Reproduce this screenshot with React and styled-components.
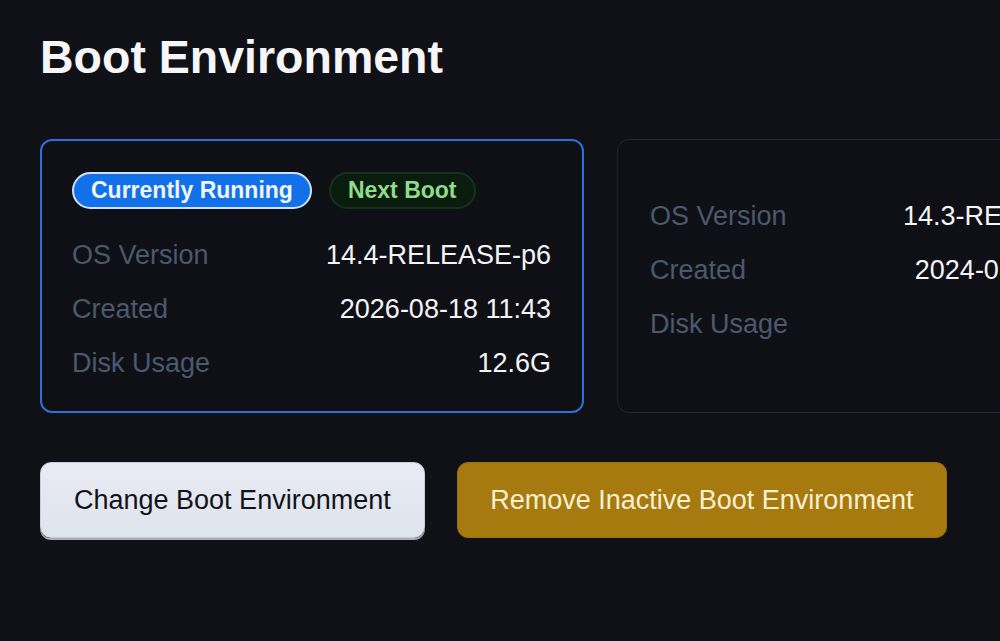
import React from "react";
import styled, { createGlobalStyle } from "styled-components";

const Global = createGlobalStyle`
  html, body { margin: 0; padding: 0; background: #101116; overflow: hidden; }
  body { font-family: "Liberation Sans", Arial, Helvetica, sans-serif; }
  * { box-sizing: border-box; }
`;

const Page = styled.div`
  width: 1000px;
  height: 641px;
  padding: 30px 0 0 40px;
  background: #101116;
  overflow: hidden;
  display: flex;
  flex-direction: column;
`;

const Title = styled.h1`
  margin: 0;
  font-size: 46.5px;
  line-height: 55px;
  font-weight: 700;
  color: #f6f6f8;
  letter-spacing: 0;
`;

const CardRow = styled.div`
  display: flex;
  gap: 33px;
  margin-top: 54px;
  align-items: stretch;
`;

const Card = styled.div`
  flex: 0 0 544px;
  width: 544px;
  height: 274px;
  border-radius: 12px;
  border: ${(p) => (p.$active ? "2px solid #2f70d8" : "1.5px solid #24262d")};
  background: #0f1015;
  padding: ${(p) => (p.$active ? "31px 31px 0 30px" : "49px 32px 0 32px")};
  display: flex;
  flex-direction: column;
`;

const Badges = styled.div`
  display: flex;
  flex-shrink: 0;
  gap: 17px;
  margin-bottom: 19px;
`;

const Badge = styled.span`
  display: inline-flex;
  align-items: center;
  height: 37px;
  padding: 0 17px;
  border-radius: 19px;
  font-size: 23px;
  font-weight: 700;
  background: ${(p) => (p.$kind === "running" ? "#1270e8" : "#0a1c0d")};
  border: 2px solid ${(p) => (p.$kind === "running" ? "#cfe2ff" : "#14321a")};
  color: ${(p) => (p.$kind === "running" ? "#eef5ff" : "#8fdc8c")};
`;

const InfoRow = styled.div`
  display: flex;
  flex-shrink: 0;
  justify-content: space-between;
  align-items: center;
  height: 54px;
  font-size: 27px;
`;

const Label = styled.span`
  color: #4c586e;
`;

const Value = styled.span`
  color: #f3f4f7;
`;

const Actions = styled.div`
  display: flex;
  gap: 32px;
  margin-top: 49px;
`;

const Button = styled.button`
  height: 76px;
  padding: 0 ${(p) => (p.$variant === "warn" ? "32.5px" : "33px")};
  border-radius: 11px;
  font-family: "Liberation Sans", Arial, Helvetica, sans-serif;
  font-size: 27px;
  cursor: pointer;
  border: ${(p) => (p.$variant === "warn" ? "1px solid #9a700c" : "1px solid #c9cdd8")};
  background: ${(p) =>
    p.$variant === "warn"
      ? "#a77a10"
      : "linear-gradient(#e8ebf3, #dfe3ec)"};
  color: ${(p) => (p.$variant === "warn" ? "#f7f0d2" : "#121318")};
  box-shadow: ${(p) =>
    p.$variant === "warn" ? "none" : "0 2px 0 #a7acb8"};
`;

const envs = [
  {
    active: true,
    os: "14.4-RELEASE-p6",
    created: "2026-08-18 11:43",
    disk: "12.6G",
  },
  {
    active: false,
    os: "14.3-RELEASE-p9",
    created: "2024-03-12 09:27",
    disk: "8.1G",
  },
];

export default function App() {
  return (
    <>
      <Global />
      <Page>
        <Title>Boot Environment</Title>
        <CardRow>
          {envs.map((e, i) => (
            <Card key={i} $active={e.active}>
              {e.active && (
                <Badges>
                  <Badge $kind="running">Currently Running</Badge>
                  <Badge $kind="next">Next Boot</Badge>
                </Badges>
              )}
              <InfoRow>
                <Label>OS Version</Label>
                <Value>{e.os}</Value>
              </InfoRow>
              <InfoRow>
                <Label>Created</Label>
                <Value>{e.created}</Value>
              </InfoRow>
              <InfoRow>
                <Label>Disk Usage</Label>
                <Value>{e.disk}</Value>
              </InfoRow>
            </Card>
          ))}
        </CardRow>
        <Actions>
          <Button>Change Boot Environment</Button>
          <Button $variant="warn">Remove Inactive Boot Environment</Button>
        </Actions>
      </Page>
    </>
  );
}
